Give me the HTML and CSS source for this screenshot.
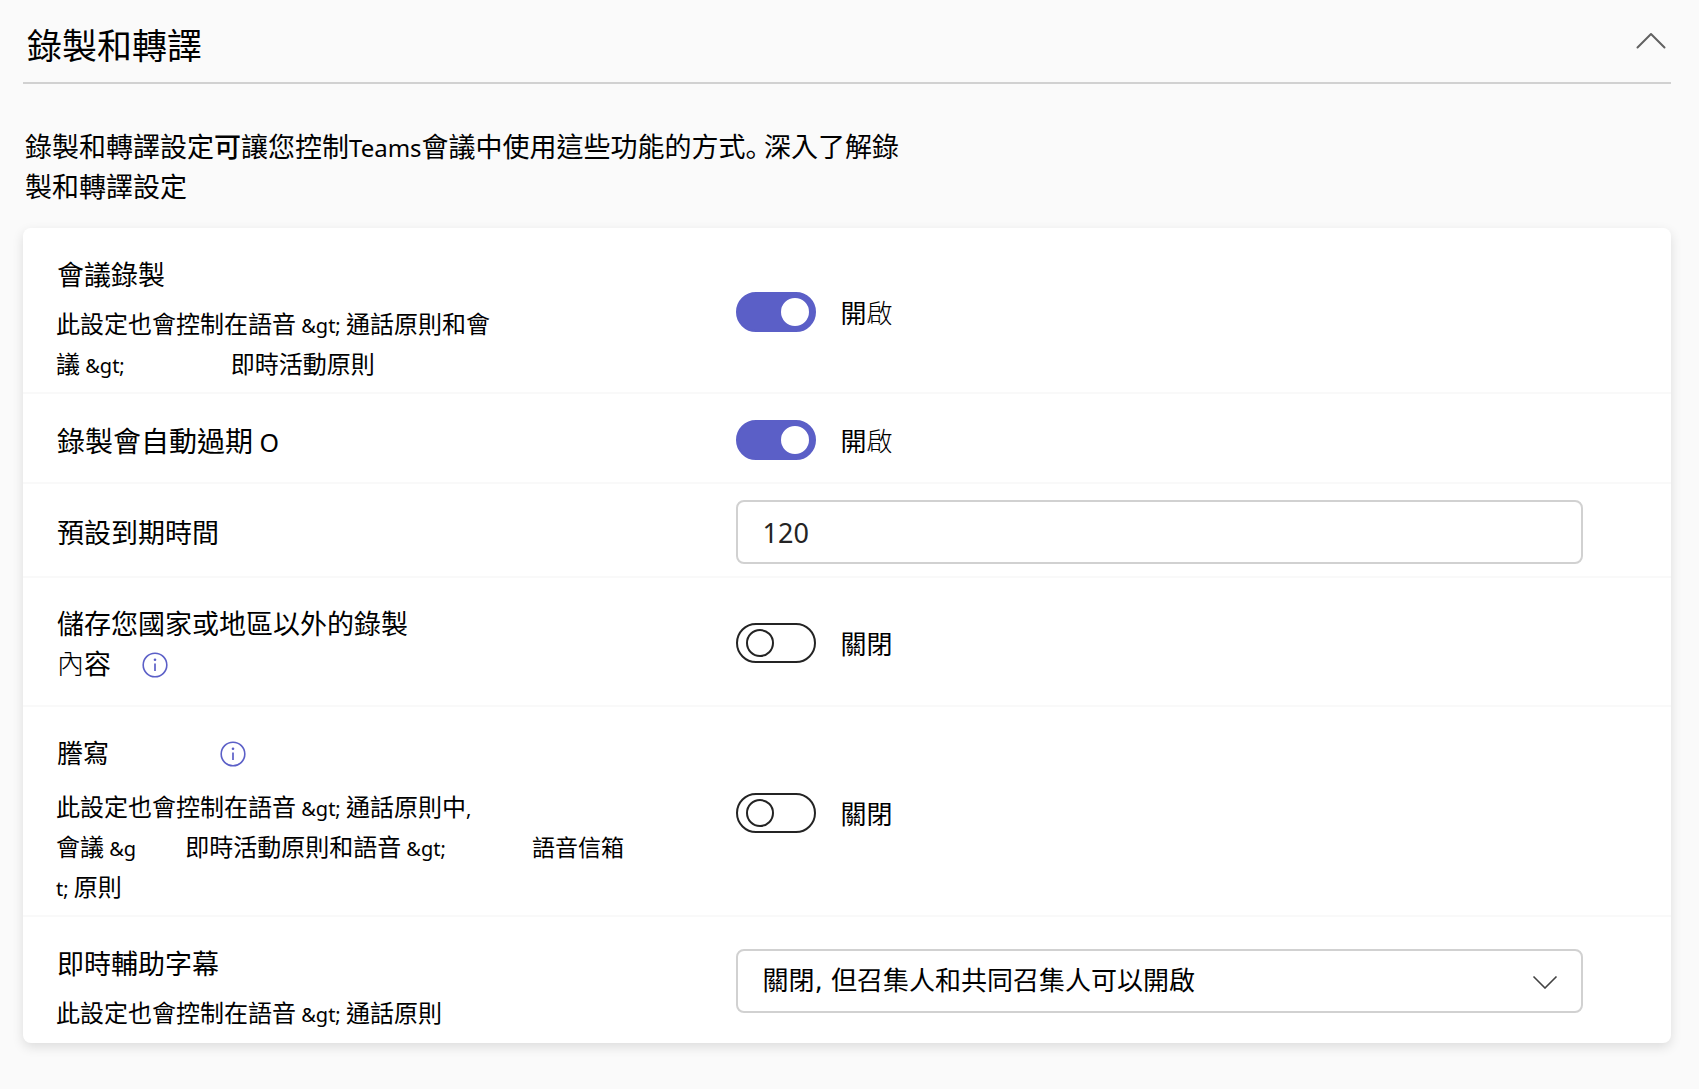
FILE: index.html
```html
<!DOCTYPE html>
<html lang="zh-TW">
<head>
<meta charset="utf-8">
<meta name="viewport" content="width=device-width, initial-scale=1">
<title>錄製和轉譯</title>
<link rel="stylesheet" href="styles.css">
</head>
<body>
<main class="section">
  <header class="section-header">
    <h1 class="section-title">錄製和轉譯</h1>
    <button class="collapse" type="button" aria-label="錄製和轉譯" aria-expanded="true">
      <svg width="30" height="18" viewBox="0 0 30 18" fill="none" stroke="#616161" stroke-width="2" stroke-linecap="round" stroke-linejoin="round"><path d="M1.5 15.500 15 2l13.500 13.500"/></svg>
    </button>
  </header>

  <p class="intro">錄製和轉譯設定<span class="medium">可</span>讓您控制<span class="intro-latin">Teams</span>會議中使用這些功能的方式<span class="stop" lang="ja">。</span>深入了解錄<br>製和轉譯設定</p>

  <form class="card">
    <div class="row">
      <div class="text">
        <label class="label" for="recording">會議錄製</label>
        <p class="desc">此設定也會控制在語音<span class="latin"> &amp;gt; </span>通話原則和會<br>議<span class="latin"> &amp;gt;</span><span class="gap-wide">即時活動原則</span></p>
      </div>
      <div class="control">
        <input class="switch" type="checkbox" role="switch" id="recording" checked>
        <span class="state">開<span class="thin">啟</span></span>
      </div>
    </div>

    <div class="row row-expire">
      <div class="text">
        <label class="label label-large" for="expire">錄製會自動過期<span class="label-latin"> O</span></label>
      </div>
      <div class="control">
        <input class="switch" type="checkbox" role="switch" id="expire" checked>
        <span class="state">開<span class="thin">啟</span></span>
      </div>
    </div>

    <div class="row row-field">
      <div class="text">
        <label class="label" for="days">預設到期時間</label>
      </div>
      <div class="control">
        <input class="field" type="text" inputmode="numeric" id="days" value="120">
      </div>
    </div>

    <div class="row row-store">
      <div class="text">
        <label class="label" for="store">儲存您國家或地區以外的錄製</label>
        <div class="label-line">
          <label class="label" for="store"><span class="thin">內</span>容</label>
          <button class="info info-near" type="button" aria-label="資訊">
            <svg width="26" height="26" viewBox="0 0 26 26" fill="none" stroke="#5b5fc7" stroke-width="1.600"><circle cx="13" cy="13" r="11.800"/><path d="M13 11.500v7.500" stroke-width="1.700"/><circle cx="13" cy="7.700" r="1.300" fill="#5b5fc7" stroke="none"/></svg>
          </button>
        </div>
      </div>
      <div class="control">
        <input class="switch" type="checkbox" role="switch" id="store">
        <span class="state">關閉</span>
      </div>
    </div>

    <div class="row row-transcribe">
      <div class="text">
        <div class="label-line">
          <label class="label label-small" for="transcribe">謄寫</label>
          <button class="info info-far" type="button" aria-label="資訊">
            <svg width="26" height="26" viewBox="0 0 26 26" fill="none" stroke="#5b5fc7" stroke-width="1.600"><circle cx="13" cy="13" r="11.800"/><path d="M13 11.500v7.500" stroke-width="1.700"/><circle cx="13" cy="7.700" r="1.300" fill="#5b5fc7" stroke="none"/></svg>
          </button>
        </div>
        <p class="desc">此設定也會控制在語音<span class="latin"> &amp;gt; </span>通話原則中<span class="latin">,</span><br>會議<span class="latin"> &amp;g</span><span class="gap-narrow">即時活動原則和語音</span><span class="latin"> &amp;gt;</span><span class="gap-mid">語音信箱</span><br><span class="latin">t; </span>原則</p>
      </div>
      <div class="control">
        <input class="switch" type="checkbox" role="switch" id="transcribe">
        <span class="state">關閉</span>
      </div>
    </div>

    <div class="row row-captions">
      <div class="text">
        <label class="label" for="captions">即時輔助字幕</label>
        <p class="desc">此設定也會控制在語音<span class="latin"> &amp;gt; </span>通話原則</p>
      </div>
      <div class="control">
        <div class="select-box">
          <select class="field select" id="captions">
            <option>關閉, 但召集人和共同召集人可以開啟</option>
          </select>
          <svg class="select-arrow" width="26" height="14" viewBox="0 0 26 14" fill="none" stroke="#424242" stroke-width="1.600"><path d="M1.500 1.500 13 13 24.500 1.500"/></svg>
        </div>
      </div>
    </div>
  </form>
</main>
</body>
</html>
```
FILE: styles.css
```css
*,
*::before {
  box-sizing: border-box;
}

body {
  margin: 0;
  background: #fafafa;
  color: #000;
  font-family: "Noto Sans CJK TC", sans-serif;
}

h1,
p {
  margin: 0;
}

button {
  padding: 0;
  border: 0;
  background: none;
  cursor: pointer;
}

svg {
  display: block;
}

.section {
  padding: 0 28px 46px 23px;
}

.section-header {
  display: flex;
  align-items: center;
  justify-content: space-between;
  height: 84px;
  padding: 0 5px 0 4px;
  border-bottom: 2px solid #d1d1d1;
}

.section-title {
  padding-top: 6px;
  font-size: 35px;
  font-weight: 400;
  line-height: 48px;
}

.intro {
  padding: 42px 0 22px 2px;
  font-size: 27px;
  line-height: 40px;
}

.intro span,
.label span,
.desc span,
.state span {
  line-height: 1;
}

.intro-latin {
  font-family: "Noto Sans", sans-serif;
  font-size: 24px;
}

.stop {
  margin-right: 5px;
  font-family: "Noto Sans CJK JP", sans-serif;
  font-feature-settings: "halt";
}

.medium {
  font-weight: 500;
}

.thin {
  font-weight: 300;
}

.card {
  background: #fff;
  border-radius: 8px;
  box-shadow: 0 4px 12px rgba(0, 0, 0, 0.12);
}

.row {
  display: grid;
  grid-template-columns: 89fr 111fr;
  align-items: center;
  padding: 26px 88px 9px 33px;
  border-bottom: 2px solid #f9f9f9;
}

.row-expire {
  padding-bottom: 22px;
}

.row-field {
  padding-top: 16px;
  padding-bottom: 12px;
}

.row-store {
  padding-top: 25px;
  padding-bottom: 22px;
}

.row-transcribe {
  padding-top: 25px;
}

.row-captions {
  padding-bottom: 11px;
  border-bottom: 0;
}

.text {
  white-space: nowrap;
}

.label {
  display: block;
  padding-left: 1px;
  font-size: 27px;
  line-height: 40px;
}

.label-large {
  font-size: 28px;
}

.label-small {
  font-size: 26px;
}

.label-latin {
  font-family: "Noto Sans", sans-serif;
  font-size: 25px;
}

.label-line {
  display: flex;
  align-items: center;
}

.desc {
  padding-top: 9px;
  font-size: 24px;
  line-height: 40px;
}

.row-transcribe .desc {
  padding-top: 14px;
}

.latin {
  font-family: "Noto Sans", sans-serif;
  font-size: 20px;
}

.gap-wide {
  margin-left: 106px;
}

.gap-mid {
  margin-left: 86px;
  font-size: 23px;
}

.gap-narrow {
  margin-left: 49px;
}

.info {
  margin-top: 4px;
}

.info-near {
  margin-left: 31px;
}

.info-far {
  margin-left: 111px;
}

.control {
  display: flex;
  align-items: center;
  margin-top: -13px;
}

.row-expire .control,
.row-field .control,
.row-store .control {
  margin-top: 0;
}

.switch {
  appearance: none;
  display: flex;
  align-items: center;
  width: 80px;
  height: 40px;
  margin: 0;
  padding: 0 8px;
  border: 2px solid #242424;
  border-radius: 20px;
  background: #fff;
}

.switch::before {
  content: "";
  width: 28px;
  height: 28px;
  border: 2px solid #242424;
  border-radius: 50%;
}

.switch:checked {
  justify-content: flex-end;
  padding: 0 5px;
  border-color: #5b5fc7;
  background: #5b5fc7;
}

.switch:checked::before {
  border-color: #fff;
  background: #fff;
}

.state {
  margin-left: 25px;
  font-size: 26px;
  line-height: 40px;
}

.field {
  width: 100%;
  height: 64px;
  padding: 0 25px;
  border: 2px solid #d1d1d1;
  border-radius: 8px;
  background: #fff;
  color: #242424;
  font-family: "Noto Sans", sans-serif;
  font-size: 27px;
}

.select-box {
  position: relative;
  width: 100%;
}

.select {
  appearance: none;
  padding-right: 80px;
  color: #000;
  font-family: "DejaVu Sans", "Noto Sans CJK TC", sans-serif;
  font-size: 26px;
}

.select-arrow {
  position: absolute;
  top: 26px;
  right: 25px;
  pointer-events: none;
}
```
